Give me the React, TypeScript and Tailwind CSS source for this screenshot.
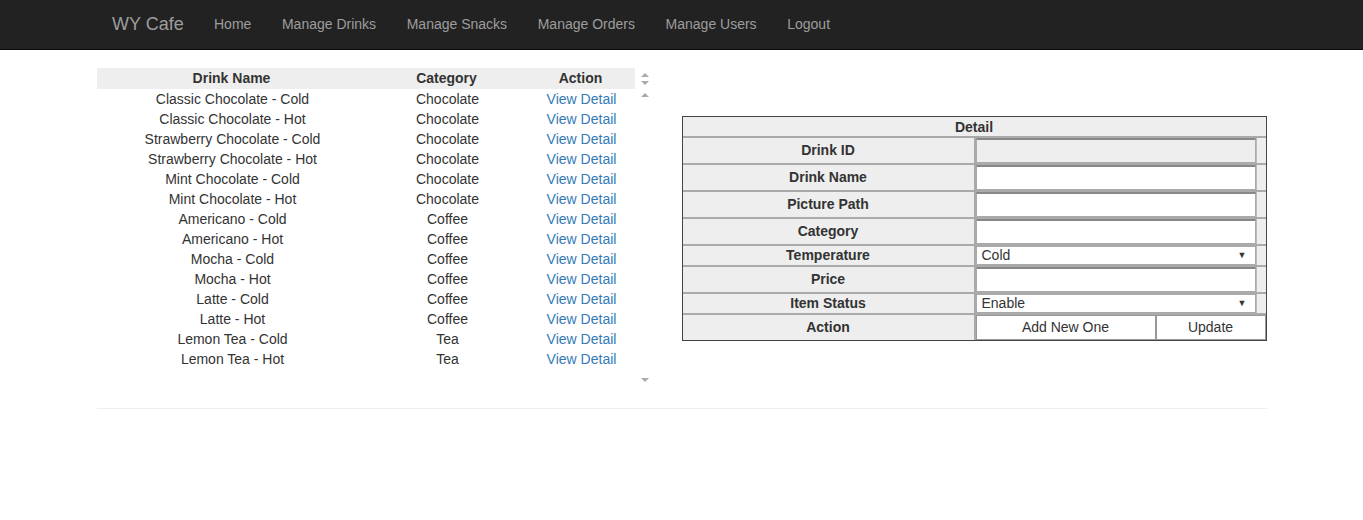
import React from 'react'

const drinks: [string, string][] = [
  ['Classic Chocolate - Cold', 'Chocolate'],
  ['Classic Chocolate - Hot', 'Chocolate'],
  ['Strawberry Chocolate - Cold', 'Chocolate'],
  ['Strawberry Chocolate - Hot', 'Chocolate'],
  ['Mint Chocolate - Cold', 'Chocolate'],
  ['Mint Chocolate - Hot', 'Chocolate'],
  ['Americano - Cold', 'Coffee'],
  ['Americano - Hot', 'Coffee'],
  ['Mocha - Cold', 'Coffee'],
  ['Mocha - Hot', 'Coffee'],
  ['Latte - Cold', 'Coffee'],
  ['Latte - Hot', 'Coffee'],
  ['Lemon Tea - Cold', 'Tea'],
  ['Lemon Tea - Hot', 'Tea'],
]

const navLinks = ['Home', 'Manage Drinks', 'Manage Snacks', 'Manage Orders', 'Manage Users', 'Logout']

function Up() {
  return <div className="w-0 h-0 border-l-[4px] border-r-[4px] border-b-[4px] border-l-transparent border-r-transparent border-b-[#aaa]" />
}
function Down() {
  return <div className="w-0 h-0 border-l-[4px] border-r-[4px] border-t-[4px] border-l-transparent border-r-transparent border-t-[#aaa]" />
}

function Label({ text, tall }: { text: string; tall?: boolean }) {
  return (
    <div className={`w-[293px] shrink-0 flex items-center justify-center font-bold bg-[#eee] border-r-2 border-[#aaa] ${tall ? 'h-[25px]' : 'h-[19px]'}`}>
      {text}
    </div>
  )
}

function TextRow({ text, disabled }: { text: string; disabled?: boolean }) {
  return (
    <div className="flex border-b-2 border-[#aaa]">
      <Label text={text} tall />
      <div className="flex-1 flex h-[25px] bg-[#eee]">
        <div className={`w-[280px] h-full border border-t-2 border-[#aaa] border-t-[#888] ${disabled ? 'bg-[#eee]' : 'bg-white'}`} />
        <div className="flex-1 border-l border-[#bbb]" />
      </div>
    </div>
  )
}

function SelectRow({ text, value }: { text: string; value: string }) {
  return (
    <div className="flex border-b-2 border-[#aaa]">
      <Label text={text} />
      <div className="flex-1 flex h-[19px] bg-[#eee]">
        <div className="w-[280px] h-full bg-white border border-[#aaa] flex items-center justify-between pl-[5px] pr-[8px]">
          <span>{value}</span>
          <span className="text-[9px]">▼</span>
        </div>
        <div className="flex-1 border-l border-[#bbb]" />
      </div>
    </div>
  )
}

export default function App() {
  return (
    <div className="min-h-[520px] bg-white text-[14px] text-[#333]" style={{ fontFamily: '"Liberation Sans", Arial, sans-serif' }}>
      <nav className="h-[50px] bg-[#222] border-b border-[#080808] flex items-center pl-[112px]">
        <span className="text-[18px] text-[#9d9d9d] mr-[15px]">WY Cafe</span>
        {navLinks.map((l) => (
          <span key={l} className="px-[15.3px] text-[14px] text-[#9d9d9d]">{l}</span>
        ))}
      </nav>

      <div className="w-[1170px] mx-auto mt-[18px]">
        <div className="flex">
          <div className="flex h-[321px]">
            <div className="w-[538px]">
              <div className="grid grid-cols-[270px_160px_108px] h-[21px] bg-[#eee] font-bold items-center text-center">
                <div>Drink Name</div>
                <div>Category</div>
                <div>Action</div>
              </div>
              {drinks.map(([n, c]) => (
                <div key={n} className="grid grid-cols-[270px_160px_108px] h-[20px] leading-[20px] text-center pl-[1px]">
                  <div>{n}</div>
                  <div>{c}</div>
                  <div className="text-[#337ab7]">View Detail</div>
                </div>
              ))}
            </div>
            <div className="w-[20px] flex flex-col items-center">
              <div className="flex flex-col items-center gap-[4px] mt-[5px]">
                <Up />
                <Down />
              </div>
              <div className="mt-[8px]"><Up /></div>
              <div className="mt-[281px]"><Down /></div>
            </div>
          </div>

          <div className="ml-[27px] mt-[48px]">
            <div className="w-[585px] border border-[#444]">
              <div className="h-[21px] flex items-center justify-center font-bold bg-[#eee] border-b-2 border-[#aaa] pt-[1px]">Detail</div>
              <TextRow text="Drink ID" disabled />
              <TextRow text="Drink Name" />
              <TextRow text="Picture Path" />
              <TextRow text="Category" />
              <SelectRow text="Temperature" value="Cold" />
              <TextRow text="Price" />
              <SelectRow text="Item Status" value="Enable" />
              <div className="flex">
                <Label text="Action" tall />
                <div className="flex-1 flex h-[25px] bg-[#eee]">
                  <div className="w-[180px] bg-white border border-[#999] flex items-center justify-center">Add New One</div>
                  <div className="flex-1 bg-white border border-[#999] flex items-center justify-center">Update</div>
                </div>
              </div>
            </div>
          </div>
        </div>

        <hr className="mt-[19px] border-t border-[#eee]" />
      </div>
    </div>
  )
}
